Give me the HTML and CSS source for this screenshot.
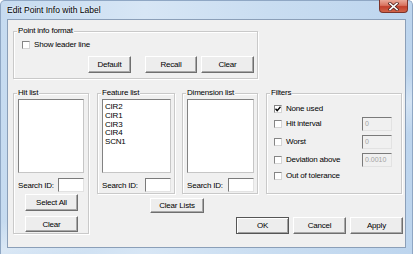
FILE: index.html
```html
<!DOCTYPE html>
<html lang="en">
<head>
    <meta charset="UTF-8">
    <title>Edit Point Info with Label</title>
    <link rel="stylesheet" href="styles.css">
</head>
<body>
    <div class="window">
        <div class="titlebar">
            <span class="title">Edit Point Info with Label</span>
            <div class="close-btn">
                <svg width="11" height="9" viewBox="0 0 11 9">
                    <path d="M2 1.5 L9 7.5 M9 1.5 L2 7.5" stroke="#5a2a24" stroke-width="3.2" stroke-linecap="square"/>
                    <path d="M2 1.5 L9 7.5 M9 1.5 L2 7.5" stroke="#ffffff" stroke-width="1.6" stroke-linecap="square"/>
                </svg>
            </div>
        </div>

        <div class="client">
            <div class="group group-format">
                <span class="group-label">Point info format</span>
                <label class="check">
                    <span class="box"></span>
                    Show leader line
                </label>
                <div class="format-buttons">
                    <button class="btn btn-default-fmt">Default</button>
                    <button class="btn btn-recall">Recall</button>
                    <button class="btn btn-clear-fmt">Clear</button>
                </div>
            </div>

            <div class="lower">
                <div class="group group-list group-hit">
                    <span class="group-label">Hit list</span>
                    <div class="listbox"></div>
                    <div class="search-row">
                        <span>Search ID:</span>
                        <div class="field"></div>
                    </div>
                    <button class="btn btn-select-all">Select All</button>
                    <button class="btn btn-clear-hit">Clear</button>
                </div>

                <div class="right">
                    <div class="lists-row">
                        <div class="group group-list group-feature">
                            <span class="group-label">Feature list</span>
                            <div class="listbox">
                                <div class="item">CIR2</div>
                                <div class="item">CIR1</div>
                                <div class="item">CIR3</div>
                                <div class="item">CIR4</div>
                                <div class="item">SCN1</div>
                            </div>
                            <div class="search-row">
                                <span>Search ID:</span>
                                <div class="field"></div>
                            </div>
                        </div>

                        <div class="group group-list group-dim">
                            <span class="group-label">Dimension list</span>
                            <div class="listbox"></div>
                            <div class="search-row">
                                <span>Search ID:</span>
                                <div class="field"></div>
                            </div>
                        </div>

                        <div class="group group-filters">
                            <span class="group-label">Filters</span>
                            <div class="filter-row row-first">
                                <label class="check">
                                    <span class="box checked">
                                        <svg width="6" height="6" viewBox="0 0 6 6"><path d="M0.5 2.8 L2.2 4.6 L5.5 0.8" stroke="#000" stroke-width="1.4" fill="none"/></svg>
                                    </span>
                                    None used
                                </label>
                            </div>
                            <div class="filter-row row-input">
                                <label class="check"><span class="box"></span>Hit interval</label>
                                <div class="field field-disabled">0</div>
                            </div>
                            <div class="filter-row row-input">
                                <label class="check"><span class="box"></span>Worst</label>
                                <div class="field field-disabled">0</div>
                            </div>
                            <div class="filter-row row-input">
                                <label class="check"><span class="box"></span>Deviation above</label>
                                <div class="field field-disabled">0.0010</div>
                            </div>
                            <div class="filter-row row-last">
                                <label class="check"><span class="box"></span>Out of tolerance</label>
                            </div>
                        </div>
                    </div>

                    <button class="btn btn-clear-lists">Clear Lists</button>

                    <div class="dialog-buttons">
                        <button class="btn btn-ok">OK</button>
                        <button class="btn">Cancel</button>
                        <button class="btn">Apply</button>
                    </div>
                </div>
            </div>
        </div>
    </div>
</body>
</html>
```

FILE: styles.css
```css
* {
    margin: 0;
    padding: 0;
    box-sizing: border-box;
}

body {
    width: 413px;
    height: 254px;
    overflow: hidden;
    font-family: 'Liberation Sans', Arial, sans-serif;
    font-size: 8px;
    letter-spacing: -0.2px;
    color: #000;
    background: #ffffff;
}

.window {
    width: 413px;
    height: 254px;
    padding: 0 6px 6px 6px;
    border-radius: 5px 5px 0 0;
    border: 1px solid #8fa7c4;
    border-bottom: none;
    background:
        linear-gradient(160deg, rgba(255, 255, 255, 0) 55%, rgba(255, 255, 255, 0.35) 62%, rgba(255, 255, 255, 0) 70%),
        linear-gradient(to right, #c6dbf0 0%, #d7e6f5 35%, #c9ddf1 65%, #bdd5ee 100%);
}

.titlebar {
    height: 18px;
    display: flex;
    justify-content: space-between;
    align-items: flex-start;
}

.title {
    font-family: 'Liberation Sans', Arial, sans-serif;
    font-size: 8.5px;
    letter-spacing: 0;
    line-height: 12px;
    padding-top: 3px;
    text-shadow: 0 0 3px #ffffff;
}

.close-btn {
    width: 29px;
    height: 13px;
    margin-top: -1px;
    margin-right: -2px;
    border: 1px solid #7d3329;
    border-top: none;
    border-radius: 0 0 4px 4px;
    background: linear-gradient(to bottom, #e9a999 0%, #d9735f 45%, #c2402c 55%, #d1644a 100%);
    display: flex;
    justify-content: center;
    align-items: center;
}

.client {
    height: 229px;
    background: #f0f0f0;
    border: 1px solid #8b9fb8;
    padding: 11px 0 0 5px;
}

/* group boxes */
.group {
    position: relative;
    border: 1px solid #c9c9c9;
    box-shadow: inset 1px 1px 0 #ffffff, 1px 1px 0 #ffffff;
}

.group-label {
    position: absolute;
    top: -6px;
    left: 3px;
    padding: 0 1px;
    line-height: 10px;
    background: #f0f0f0;
}

.group-format {
    width: 245px;
    height: 48px;
    padding: 8px 0 0 8px;
}

.check {
    display: flex;
    align-items: center;
    gap: 4px;
    height: 10px;
    line-height: 10px;
}

.box {
    width: 8px;
    height: 8px;
    flex-shrink: 0;
    background: #ffffff;
    border: 1px solid;
    border-color: #858585 #d4d4d4 #d4d4d4 #858585;
    display: flex;
    justify-content: center;
    align-items: center;
}

.format-buttons {
    display: flex;
    margin-top: 6px;
    margin-left: 66px;
}

.btn {
    height: 17px;
    font-family: inherit;
    font-size: 8px;
    letter-spacing: -0.2px;
    color: #000;
    background: #ededed;
    border: 1px solid;
    border-color: #ffffff #6f6f6f #6f6f6f #ffffff;
    box-shadow: inset -1px -1px 0 #a8a8a8;
    cursor: pointer;
}

.btn-default-fmt {
    width: 43px;
}

.btn-recall {
    width: 52px;
    margin-left: 14px;
}

.btn-clear-fmt {
    width: 53px;
    margin-left: 4px;
}

/* lower area */
.lower {
    display: flex;
    align-items: flex-start;
    margin-top: 14px;
}

.group-list {
    padding: 5px 3px 0 4px;
}

.group-hit {
    width: 76px;
    height: 141px;
    display: flex;
    flex-direction: column;
}

.listbox {
    height: 74px;
    background: #ffffff;
    border: 1px solid;
    border-color: #828282 #c6c6c6 #c6c6c6 #828282;
    padding: 3px 0 0 2px;
}

.group-hit .listbox {
    margin-right: 1px;
}

.item {
    line-height: 8.8px;
}

.search-row {
    display: flex;
    justify-content: space-between;
    align-items: center;
    margin-top: 5px;
    height: 14px;
}

.group-hit .search-row {
    margin-right: 1px;
}

.field {
    width: 26px;
    height: 14px;
    background: #ffffff;
    border: 1px solid;
    border-color: #7a7a7a #e2e2e2 #e2e2e2 #7a7a7a;
}

.btn-select-all,
.btn-clear-hit {
    width: 53px;
    height: 17px;
    align-self: flex-start;
    margin-left: 7px;
}

.btn-select-all {
    margin-top: 2px;
}

.btn-clear-hit {
    height: 16px;
    margin-top: 5px;
}

.right {
    margin-left: 8px;
}

.lists-row {
    display: flex;
    align-items: flex-start;
}

.group-feature,
.group-dim,
.group-filters {
    height: 101px;
}

.group-feature {
    width: 78px;
}

.group-dim {
    width: 76px;
    margin-left: 7px;
}

.group-filters {
    width: 136px;
    margin-left: 8px;
    padding: 0 9px 0 7px;
}

.filter-row {
    display: flex;
    justify-content: space-between;
    align-items: center;
    height: 14px;
    margin-top: 4px;
}

.row-first {
    height: 12px;
    margin-top: 9px;
}

.row-first + .filter-row {
    margin-top: 2px;
}

.row-last {
    height: 12px;
    margin-top: 3px;
}

.field-disabled {
    width: 30px;
    background: #f0f0f0;
    color: #a3a3a3;
    font-size: 7px;
    letter-spacing: 0;
    line-height: 12px;
    padding-left: 2px;
}

.btn-clear-lists {
    display: block;
    width: 54px;
    height: 15px;
    margin-top: 4px;
    margin-left: 53px;
}

.dialog-buttons {
    display: flex;
    gap: 4px;
    margin-top: 4px;
    margin-left: 139px;
}

.dialog-buttons .btn {
    width: 53px;
}

.btn-ok {
    border-color: #555555;
    box-shadow: inset 1px 1px 0 #ffffff, inset -1px -1px 0 #a0a0a0;
}
```
